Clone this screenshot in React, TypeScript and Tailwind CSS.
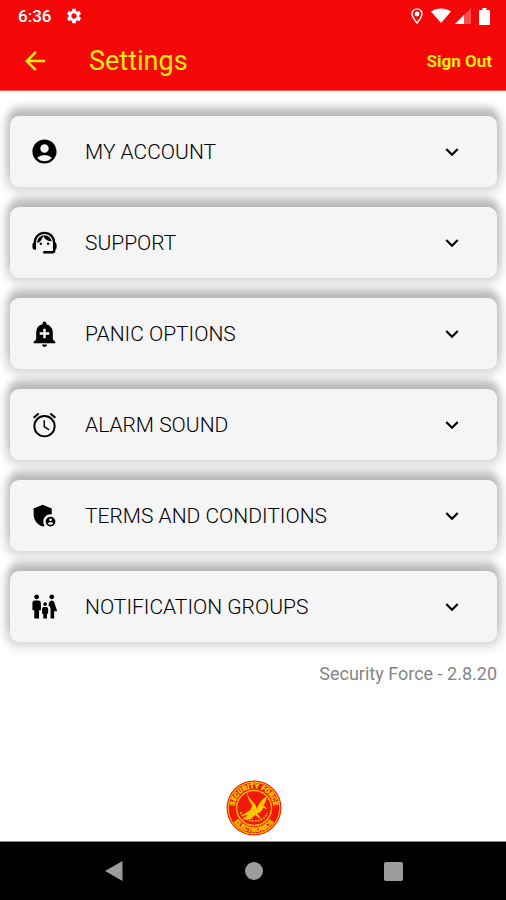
import React, { useState } from 'react';
import {
  MdAccountCircle,
  MdAddAlert,
  MdAdminPanelSettings,
  MdArrowBack,
  MdFamilyRestroom,
  MdKeyboardArrowDown,
  MdSettings,
  MdSupportAgent,
} from 'react-icons/md';

interface Section {
  id: string;
  title: string;
  icon: React.ComponentType<{ size?: number }>;
}

// Alarm clock with a thin outline
const AlarmIcon: React.FC<{ size?: number }> = ({ size = 24 }) => (
  <svg width={size} height={size} viewBox="0 0 24 24" fill="none" stroke="currentColor" strokeWidth="1.600">
    <circle cx="12" cy="13.400" r="8.400" />
    <path d="M3 6.400 7.200 2.900M21 6.400 16.800 2.900" strokeWidth="1.800" />
    <path d="M11.800 8.500v5.300l4 2.700" strokeWidth="1.200" />
  </svg>
);

const sections: Section[] = [
  { id: 'account', title: 'MY ACCOUNT', icon: MdAccountCircle },
  { id: 'support', title: 'SUPPORT', icon: MdSupportAgent },
  { id: 'panic', title: 'PANIC OPTIONS', icon: MdAddAlert },
  { id: 'alarm', title: 'ALARM SOUND', icon: AlarmIcon },
  { id: 'terms', title: 'TERMS AND CONDITIONS', icon: MdAdminPanelSettings },
  { id: 'groups', title: 'NOTIFICATION GROUPS', icon: MdFamilyRestroom },
];

const StatusBar: React.FC = () => (
  <div className="flex h-8 items-center justify-between pl-[18px] pr-4 text-white">
    <div className="flex items-center gap-[14px]">
      <span className="text-[17px] leading-8 font-medium">6:36</span>
      <MdSettings size={18} />
    </div>
    <div className="flex items-center gap-2">
      {/* Location */}
      <svg width="12" height="16" viewBox="0 0 12 16" fill="none" stroke="currentColor" strokeWidth="1.400">
        <path d="M6 15C3 11 1 8.600 1 5.900a5 5 0 0 1 10 0C11 8.600 9 11 6 15z" />
        <circle cx="6" cy="6" r="1.700" fill="currentColor" />
      </svg>
      <div className="flex items-center gap-1">
        {/* Wifi */}
        <svg width="20" height="16" viewBox="0 0 20 16" fill="currentColor">
          <path d="M0 3.500C5.500-.5 14.500-.5 20 3.500L10 15z" />
        </svg>
        {/* Signal */}
        <svg width="16" height="16" viewBox="0 0 16 16" fill="currentColor">
          <path d="M16 0v16H0z" opacity=".3" />
          <path d="M9 7v9H0z" />
        </svg>
      </div>
      {/* Battery */}
      <svg width="11" height="17" viewBox="0 0 11 17" fill="currentColor">
        <path d="M3.500 0h4v2H10a1 1 0 0 1 1 1v13a1 1 0 0 1-1 1H1a1 1 0 0 1-1-1V3a1 1 0 0 1 1-1h2.500z" />
      </svg>
    </div>
  </div>
);

const Logo: React.FC = () => (
  <svg width="56" height="56" viewBox="0 0 56 56" role="img" aria-label="Security Force">
    <defs>
      <path id="logo-top" d="M8.500 28a19.500 19.500 0 0 1 39 0" />
      <path id="logo-bottom" d="M3.700 28a24.300 24.300 0 0 0 48.600 0" />
    </defs>
    <circle cx="28" cy="28" r="27.500" fill="#f01808" />
    <circle cx="28" cy="28" r="25.800" fill="none" stroke="#ffb400" strokeWidth="1.200" />
    <circle cx="28" cy="28" r="17.500" fill="none" stroke="#ffb400" strokeWidth="1.500" />
    <g fill="#ffcc00" stroke="#ffcc00" strokeWidth=".3" fontSize="7" fontWeight="900" textAnchor="middle">
      <text>
        <textPath href="#logo-top" startOffset="50%">SECURITY FORCE</textPath>
      </text>
      <text>
        <textPath href="#logo-bottom" startOffset="50%">ELECTRONICS</textPath>
      </text>
    </g>
    {/* Eagle */}
    <path
      fill="#ffc800"
      d="M21 12c1 5 4 8 8 12 1 2 1 4 2 4 2-5 5-9 10-12-1 5-2 8-4 10 2 0 3 1 4 3l-4-1c-1 3-3 5-6 5l5 7-7-5-4 4-9 1 6-5-7 1 9-6c1-1 2-3 2-5-3-4-5-8-5-13z"
    />
    <path d="M14.500 32c2 5 6 9 13.500 9s11-3 13.500-8" fill="none" stroke="#ffb400" strokeWidth="1.600" strokeDasharray="2 1" />
  </svg>
);

const App: React.FC = () => {
  const [selectedId, setSelectedId] = useState<string | null>(null);

  return (
    <div className="flex min-h-screen flex-col bg-white font-['Roboto',sans-serif]">
      <header className="border-b border-[#ff5a5a] bg-[#f60707]">
        <StatusBar />
        <div className="flex h-[58px] items-center pl-5 pr-[14px] text-[#ffeb0a]">
          <button type="button" aria-label="Back">
            <MdArrowBack size={30} />
          </button>
          <h1 className="ml-[39px] text-[27px] leading-8">Settings</h1>
          <button type="button" className="ml-auto text-[17px] leading-6 font-bold">
            Sign Out
          </button>
        </div>
      </header>

      <main className="flex flex-1 flex-col pr-[9px] pl-[10px] pt-[25px]">
        <ul className="flex flex-col gap-5">
          {sections.map(({ id, title, icon: Icon }) => (
            <li key={id}>
              <button
                type="button"
                aria-pressed={selectedId === id}
                onClick={() => setSelectedId(selectedId === id ? null : id)}
                className="flex h-[71px] w-full items-center rounded-[9px] bg-[#f5f5f5] pr-8 pl-5 text-left text-black shadow-[0_-9px_7px_1px_rgba(0,0,0,0.16),0_0_10px_5px_rgba(0,0,0,0.16)]"
              >
                <Icon size={29} />
                <span className="ml-[26px] flex-1 text-[21px] leading-6 font-light">{title}</span>
                <MdKeyboardArrowDown size={26} />
              </button>
            </li>
          ))}
        </ul>
        <p className="mt-5 text-right text-lg leading-6 text-[#858585]">Security Force - 2.8.20</p>
        <div className="mt-auto flex justify-center pb-[5px]">
          <Logo />
        </div>
      </main>

      {/* Android navigation */}
      <nav className="flex h-[59px] items-center justify-around border-t border-[#8a8a8a] bg-black px-[43px] text-[#9c9c9c]">
        <button type="button" aria-label="Back">
          <svg width="20" height="22" viewBox="0 0 20 22" fill="currentColor">
            <path d="M18.500 1v20L1 11z" />
          </svg>
        </button>
        <button type="button" aria-label="Home" className="size-[18px] rounded-full bg-[#9c9c9c]" />
        <button type="button" aria-label="Recents" className="size-[19px] rounded-[2px] bg-[#9c9c9c]" />
      </nav>
    </div>
  );
};

export default App;
